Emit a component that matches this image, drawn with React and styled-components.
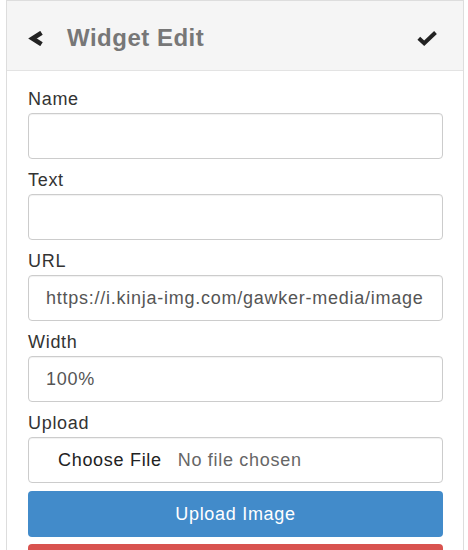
import React from 'react';
import styled, { createGlobalStyle } from 'styled-components';

const GlobalStyle = createGlobalStyle`
  html, body {
    margin: 0;
    padding: 0;
    background: #fff;
    overflow: hidden;
  }
  body {
    font-family: 'Liberation Sans', Arial, Helvetica, sans-serif;
    color: #333;
  }
`;

const Panel = styled.div`
  width: 456px;
  margin-left: 6px;
  border: 1px solid #ddd;
  background: #fff;
`;

const Header = styled.div`
  display: flex;
  align-items: center;
  height: 64px;
  padding: 5px 26px 0 21px;
  background: #f5f5f5;
  border-bottom: 1px solid #e3e3e3;
`;

const IconButton = styled.span`
  display: flex;
  align-items: center;
  color: #222;
  margin-top: ${props => props.offset || 0}px;
`;

const Title = styled.h1`
  flex: 1;
  margin: 0 0 0 23px;
  font-size: 24px;
  font-weight: bold;
  letter-spacing: 0.5px;
  color: #777;
`;

const Body = styled.div`
  padding: 17px 20px 0 21px;
`;

const Group = styled.div`
  margin-bottom: 10px;
`;

const Label = styled.label`
  display: block;
  font-size: 18px;
  line-height: 22px;
  letter-spacing: 0.7px;
  margin-bottom: 3px;
  color: #333;
`;

const Input = styled.input`
  display: block;
  box-sizing: border-box;
  width: 100%;
  height: 46px;
  margin: 0;
  padding: 0 10px 0 17px;
  border: 1px solid #ccc;
  border-radius: 4px;
  box-shadow: inset 0 1px 1px rgba(0, 0, 0, 0.06);
  font-family: inherit;
  font-size: 18px;
  letter-spacing: 0.75px;
  color: #555;
  outline: none;
`;

const FileField = styled.div`
  display: flex;
  align-items: center;
  box-sizing: border-box;
  height: 46px;
  padding-left: 29px;
  border: 1px solid #ccc;
  border-radius: 4px;
  box-shadow: inset 0 1px 1px rgba(0, 0, 0, 0.06);
  font-size: 18px;
  letter-spacing: 0.7px;
`;

const FileButton = styled.span`
  color: #222;
`;

const FileStatus = styled.span`
  margin-left: 16px;
  color: #666;
`;

const Button = styled.button`
  display: block;
  box-sizing: border-box;
  width: 100%;
  height: 46px;
  margin-top: ${props => props.gap}px;
  border: none;
  border-radius: 4px;
  background: ${props => props.bg};
  color: #fff;
  font-family: inherit;
  font-size: 18px;
  letter-spacing: 0.7px;
`;

const ChevronLeft = () => (
  <svg width="16" height="15" viewBox="0 0 16 15">
    <polyline points="13.5,1.8 4.5,7.5 13.5,13.2" fill="none" stroke="#222" strokeWidth="4.6" strokeLinejoin="miter" />
  </svg>
);

const Check = () => (
  <svg width="20" height="16" viewBox="0 0 20 16">
    <polyline points="1.8,8.2 7.2,13.2 18.5,2.5" fill="none" stroke="#222" strokeWidth="4" strokeLinejoin="miter" />
  </svg>
);

const fields = [
  { label: 'Name', value: '' },
  { label: 'Text', value: '' },
  { label: 'URL', value: 'https://i.kinja-img.com/gawker-media/image' },
  { label: 'Width', value: '100%' },
];

export default function App() {
  return (
    <>
      <GlobalStyle />
      <Panel>
        <Header>
          <IconButton offset={1}><ChevronLeft /></IconButton>
          <Title>Widget Edit</Title>
          <IconButton><Check /></IconButton>
        </Header>
        <Body>
          {fields.map(f => (
            <Group key={f.label}>
              <Label>{f.label}</Label>
              <Input defaultValue={f.value} readOnly />
            </Group>
          ))}
          <Label>Upload</Label>
          <FileField>
            <FileButton>Choose File</FileButton>
            <FileStatus>No file chosen</FileStatus>
          </FileField>
          <Button gap={8} bg="#428bca">Upload Image</Button>
          <Button gap={7} bg="#d9534f" />
        </Body>
      </Panel>
    </>
  );
}
